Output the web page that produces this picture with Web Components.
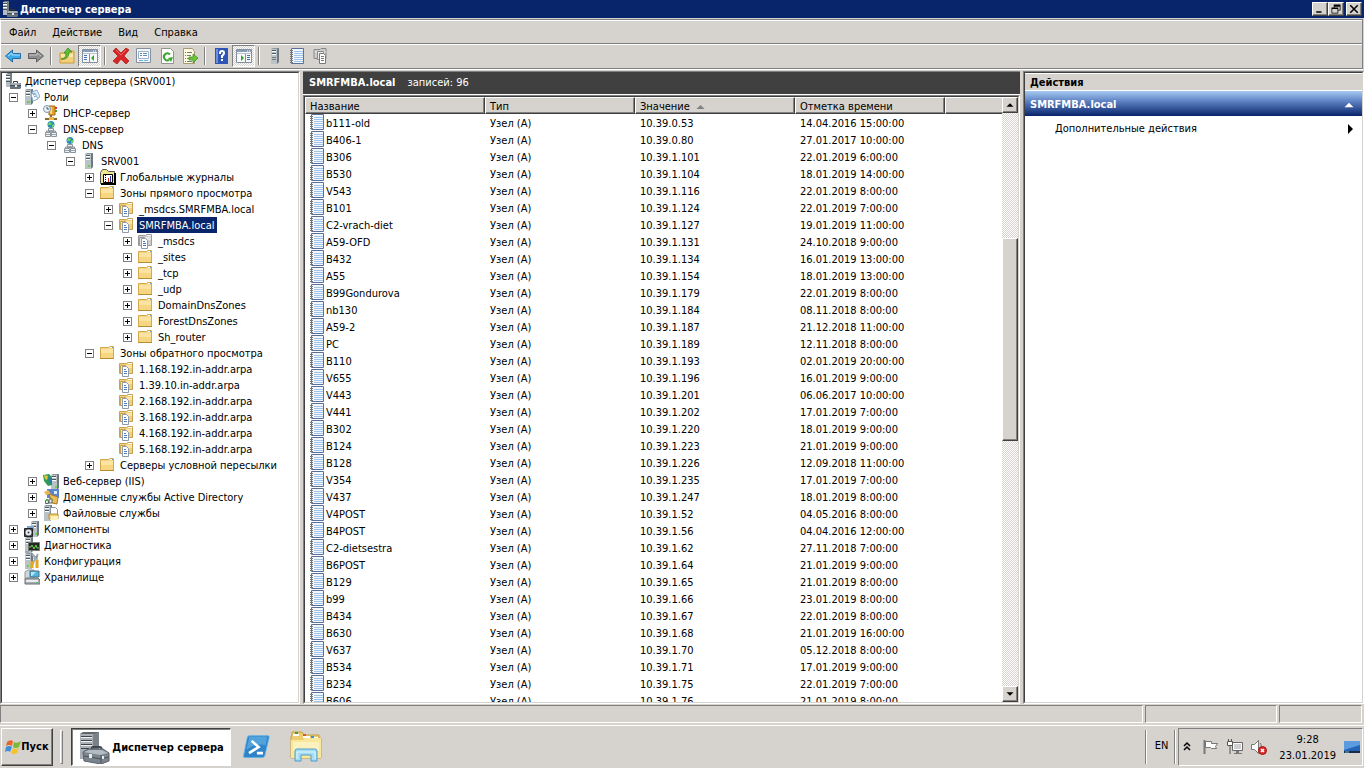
<!DOCTYPE html>
<html lang="ru">
<head>
<meta charset="utf-8">
<title>Диспетчер сервера</title>
<style>
  html, body {
    height: 100%;
    margin: 0;
  }

  body {
    --face: #d6d3ce;
    --navy: #08246b;
    --shadow: #808080;
    --dark: #404040;

    overflow: hidden;
    background: var(--face);
    color: #000;
    font: 11px/16px "DejaVu Sans Condensed", "DejaVu Sans", sans-serif;
  }
</style>
</head>
<body>
<server-desktop></server-desktop>

<script>
const FOLDER = `
  <path d="M.5 2.500h8l1-1h4v12H.5z" fill="#f6d683" stroke="#d3a94e"/>
  <path d="M10 2h3v1h-3z" fill="#fff"/><path d="M12 2h1v1h-1z" fill="#5b9ad0"/>
  <path d="M1 4h12v4H1z" fill="#fbe4a2"/>
  <path d="M0 13.500h14" stroke="#b98d30"/>`;

const zoneFolder = (fill, light, edge) => `
  <path d="M.5 2.500h7l1-1h5v11H.5z" fill="${fill}" stroke="${edge}"/>
  <path d="M9 2h4v1H9z" fill="#fff"/><path d="M1 4h12v3H1z" fill="${light}"/>
  <path d="M1.500 4.500h5v8h-5z" fill="${light}" stroke="${edge}"/>
  <path d="M3.500 5.500h4l2 2v8h-6z" fill="#fff" stroke="#8f9aa8"/>
  <path d="M5 8.500h2M5 10.500h3M5 12.500h3" stroke="#4f79b8"/>`;

const TOWER = `
  <path d="M1 1l2-1h6v14H1z" fill="#8d99a1"/><path d="M1 1h6v15H1z" fill="#b9c2c7"/>
  <path d="M7 1l2-1v14l-2 2z" fill="#6d7880"/>
  <path d="M2 2.500h4M2 5.500h4" stroke="#4e5a62"/><path d="M2 3.500h4M2 6.500h4" stroke="#fff"/>`;

const GLOBE = `
  <circle cx="8" cy="3.500" r="3.500" fill="#2b8cb4"/>
  <path d="M6 1l3 1-1 2-3 0zM9 4l2-1v2l-2 2z" fill="#6fd45b"/>`;

const NETWORK = `${GLOBE}
  <path d="M8 7v4M3.500 12v-2h9v2" fill="none" stroke="#888"/>
  <path d="M5.500 7.500h5v3h-5zM2.500 11.500h5v4h-5zM8.500 11.500h5v4h-5z" fill="#edf1f4" stroke="#8a949c"/>
  <path d="M3 13.500h4M9 13.500h4M6 9.500h4" stroke="#9aa5ae"/>`;

const MANAGER = `
  <path d="M1 1l2-1h4v12l-2 2H1z" fill="#737d84"/><path d="M1 1h4v13H1z" fill="#b4bcc1"/>
  <path d="M1 2.500h4M1 5.500h4M1 8.500h4" stroke="#4c565d"/><path d="M1 3.500h4M1 6.500h4" stroke="#fff"/>
  <path d="M8.500 10V8.500h4V10" fill="none" stroke="#333"/>
  <path d="M5 11l2-1h9v5l-1 1H5z" fill="#68727c"/><path d="M6 10h9l1 2H5z" fill="#a3acb4"/>
  <path d="M5 12.500h11" stroke="#464e55"/><path d="M10 12h2v2h-2z" fill="#e8ecee"/>`;

const NOTEBOOK = `
  <path d="M1.500.5h12v15h-12z" fill="#f2f8fe" stroke="#5b6f9c"/>
  <path d="M4 3.500h9M4 5.500h9M4 7.500h9M4 9.500h9M4 11.500h9M4 13.500h9" stroke="#9fc3e8"/>
  <path d="M0 2.500h3M0 4.500h3M0 6.500h3M0 8.500h3M0 10.500h3M0 12.500h3M0 14.500h3" stroke="#777"/>`;

const consoleFrame = (inner) => `
  <path d="M.5 1.500h15v13h-15z" fill="#f7f9fb" stroke="#8290a2"/>
  <path d="M1 2h14v2H1z" fill="#8c9cb4"/><path d="M11 3h1M13 3h1" stroke="#fff"/>
  <path d="M1 5.500h14" stroke="#b8c2d0"/>${inner}`;

const ICONS = {
  folder: FOLDER,
  zone: zoneFolder("#f2cf7b", "#fbe6a6", "#c9a354"),
  zoneGray: zoneFolder("#cfcfcf", "#e6e6e6", "#9c9c9c"),
  manager: MANAGER,
  network: NETWORK,
  notebook: NOTEBOOK,
  server: `<g transform="translate(3 0)">${TOWER}<path d="M4 12h2v2H4z" fill="#62d742"/></g>`,
  serverPlain: `<g transform="translate(3 0)">${TOWER}<path d="M2 9.500h4M2 11.500h4" stroke="#777"/></g>`,
  roles: `${TOWER}<path d="M3 12h3v2H3z" fill="#62d742"/>
    <path d="M8 3l5-2 3 7-5 3z" fill="#e4f0fb" stroke="#88acce"/>
    <path d="M7 5l4-1 3 6-5 2z" fill="#fff" stroke="#88acce"/>
    <path d="M9 6l2-1M10 8l2-1" stroke="#6794c4"/>`,
  dhcp: `<path d="M6 1h6v9H6z" fill="#e8a32e" stroke="#a76a12"/><path d="M7 2h2v7H7z" fill="#ffd578"/>
    <path d="M12 2h2v2h-2z" fill="#d33"/><path d="M12 5h2v2h-2z" fill="#3a9d3a"/>
    <circle cx="4" cy="4" r="3.500" fill="#e9f2fa" stroke="#7f94a8"/><path d="M4 2v2h2" fill="none" stroke="#456"/>
    <path d="M8 10v4M2 14h12" stroke="#8a6a2c" stroke-width="2"/><path d="M6 12h5v3H6z" fill="#f0b84c"/>`,
  logs: `<path d="M.5 3.500l2-3h4l2 2h6v12H.5z" fill="#f0e58d" stroke="#555"/>
    <path d="M3.500 5.500h9v8h-9z" fill="#fff" stroke="#000"/><path d="M5.500 6v7" stroke="#000" stroke-dasharray="1 1"/>
    <path d="M8.500 9v4" stroke="#d22"/><path d="M10.500 7v6" stroke="#23a"/>
    <path d="M15 4v12M1 15h14" stroke="#000" stroke-width="2"/>`,
  iis: `<g transform="translate(7 1)">${TOWER}</g><path d="M0 2l6-1 3 3v8l-4 1-4-5z" fill="#2e9c54"/>
    <path d="M1 2l4 1-1 4-2-1z" fill="#e9c431"/><path d="M5 3l4 3v6l-3-3z" fill="#287cb4"/>
    <path d="M12 13h2v2h-2z" fill="#62d742"/>`,
  directory: `<path d="M4 0h12v9H4z" fill="#5b84ca"/><path d="M1 3l4-2 3 4-5 1z" fill="#eab953"/>
    <path d="M6 5l9 3-1 7-5-1z" fill="#e8bd57" stroke="#a97d28"/><path d="M11 2h3v3h-3z" fill="#d9ecff"/>
    <path d="M2.500 11.500h3v3h-3zM6 10h3v4H6z" fill="#e5e9eb" stroke="#566"/><path d="M3 10h2v2H3z" fill="#4b4"/>`,
  files: `${TOWER}<path d="M7.500 2.500h5l2 2v5h-7z" fill="#fff" stroke="#8494a4"/>
    <path d="M6 9h9v5H6z" fill="#f3cd70" stroke="#b88d35"/><path d="M8 11h7v4H7z" fill="#fff1bb"/>`,
  components: `<g transform="translate(6 0)">${TOWER}</g><path d="M3 5h7v5H3z" fill="#85a4cc"/>
    <path d="M.5 7.500h8v8h-8z" fill="#454b52" stroke="#222"/><circle cx="4.500" cy="11.500" r="3" fill="#e7edf1"/>
    <circle cx="4.500" cy="11.500" r="1" fill="#345"/><path d="M11 12h2v2h-2z" fill="#62d742"/>`,
  diagnostics: `${TOWER}<path d="M4.500 5.500h11v8h-11z" fill="#202820" stroke="#777"/>
    <path d="M5 10h2l1-2 2 4 2-4 1 3h2" fill="none" stroke="#72d152"/><path d="M1 14h4v2H1z" fill="#9aa"/>`,
  config: `${TOWER}<path d="M8 1l3 3-1 2M14 1l-4 7-3 6" fill="none" stroke="#a0aab2" stroke-width="2"/>
    <path d="M8 8v7M13 7v8" stroke="#e5a71f" stroke-width="3"/><path d="M13 3v4" stroke="#777"/>
    <path d="M3 12h2v2H3z" fill="#62d742"/>`,
  storage: `<path d="M1 3l3-2h6v9H1z" fill="#d1d8dc" stroke="#8a949b"/>
    <path d="M6 2h9v6H6z" fill="#4fb4de" stroke="#4a7187"/><path d="M7 3h5L8 7H7z" fill="#b2e6f8"/>
    <path d="M1 10l2-1h11l2 2v4H1z" fill="#a7aeb3" stroke="#697178"/><path d="M2 11h12v2H2z" fill="#e8ecee"/>
    <path d="M12 13h2v1h-2z" fill="#4c4"/>`,

  back: `<path d="M.5 8l7-6v3.500h8v5h-8V14z" fill="#3fa9e6" stroke="#1b6dab"/><path d="M3 8l4-3v2h8" fill="none" stroke="#a9e0fb"/>`,
  forward: `<path d="M15.500 8l-7-6v3.500h-8v5h8V14z" fill="#8f8f8f" stroke="#5d5d5d"/><path d="M13 8L9 5v2H1" fill="none" stroke="#c4c4c4"/>`,
  up: `<path d="M1 5h6l1-2h7v12H1z" fill="#f3cf78" stroke="#c79c3f"/><path d="M2 6h12v3H2z" fill="#fbe7a7"/>
    <path d="M2 11c4 0 5-3 5-6H5l4-5 4 4h-3c0 5-3 8-8 7z" fill="#5fc138" stroke="#2d7e1b" stroke-width=".7"/>`,
  tree: consoleFrame(`<path d="M2 7.500h3M2 9.500h3M2 11.500h3" stroke="#4573b5"/><path d="M7.500 6v8" stroke="#8290a2"/>
    <path d="M12 7v6l-3-3z" fill="#37a52a"/>`),
  actions: consoleFrame(`<path d="M11 7.500h3M11 9.500h3M11 11.500h3" stroke="#4573b5"/><path d="M9.500 6v8" stroke="#8290a2"/>
    <path d="M5 7v6l3-3z" fill="#37a52a"/>`),
  remove: `<path d="M0 3l3-3 5 5 5-5 3 2-5 6 5 5-3 3-5-5-4 5-4-3 5-5z" fill="#d92525" stroke="#a91212" stroke-width=".7"/>
    <path d="M3 2l5 5 5-5" fill="none" stroke="#f26a5d"/>`,
  properties: `<path d="M.5.5h14v14H.5z" fill="#f4f7fa" stroke="#8291a4"/><path d="M2.500 3.500h10v7h-10z" fill="#fff" stroke="#a3b3c6"/>
    <path d="M4 5.500h2M7 5.500h4M4 7.500h2M7 7.500h4" stroke="#5f8bbd"/><path d="M3 12.500h4M8 12.500h4" stroke="#6bb3d7"/>`,
  refresh: `<path d="M2.500.5h9l3 3v12h-12z" fill="#fff" stroke="#929292"/>
    <path d="M11 6.500A3.500 3.500 0 1 0 10 12" fill="none" stroke="#38a52c" stroke-width="2"/><path d="M9 10l5-1-2 5z" fill="#38a52c"/>`,
  exportList: `<path d="M1.500.5h9l2 3v12h-11z" fill="#fffbe2" stroke="#a39b75"/>
    <path d="M3 4.500h1M5 4.500h5M3 7.500h1M5 7.500h4M3 10.500h1M5 10.500h3M3 13.500h1M5 13.500h5" stroke="#76787c"/>
    <path d="M7 9h4V6l5 4-5 5v-3H7z" fill="#6bc53a" stroke="#398b1d" stroke-width=".7"/>`,
  help: `<path d="M2 0h13v16H2z" fill="#2d55b5"/><path d="M3 1h2v14H3z" fill="#6e90da"/>
    <path d="M7 6V5q0-2 2-2t2 2q0 1-1 2l-1 1v2M9 11v2" fill="none" stroke="#fff" stroke-width="2"/>`,
  copies: `<path d="M1 1.500h6l1-1h5v10H1z" fill="#ccc" stroke="#888"/><path d="M2 4h11" stroke="#eee"/>
    <path d="M4.500 3.500h6v8h-6z" fill="#eee" stroke="#888"/><path d="M6.500 5.500h4l2 2v8h-6z" fill="#fff" stroke="#777"/>
    <path d="M8 8.500h3M8 10.500h3M8 12.500h3" stroke="#777"/>`,

  windows: `<path d="M2 3q3-3 6-1L7 7q-3-2-6 0z" fill="#e8662b"/><path d="M9 3q3 2 7-1l-2 6q-3 2-6 0z" fill="#7cb839"/>
    <path d="M1 8q3-2 6 0l-2 5q-2-2-5 0z" fill="#3f8fd8"/><path d="M8 9q3 2 6 0l-2 5q-3 2-6 0z" fill="#f5c42c"/>`,
  toolbox: `<path d="M2 2l3-2h16v23l-4 4H2z" fill="#5f666c"/><path d="M2 2h13v25H2z" fill="#a9afb4"/>
    <path d="M15 2l6-2v24l-6 3z" fill="#7b8287"/>
    <path d="M3 4.500h11M3 8.500h11M3 12.500h11M3 16.500h8" stroke="#3f464b"/>
    <path d="M3 5.500h11M3 9.500h11M3 13.500h11" stroke="#eef0f1"/>
    <path d="M13.500 19v-2q0-2 2-2h6q2 0 2 2v2" fill="none" stroke="#41474d" stroke-width="2"/>
    <path d="M5 20l5-3h15l6 4v8l-8 3-17-3z" fill="#7b848c" stroke="#596169"/>
    <path d="M6 20l5-2h13l6 3-8 2z" fill="#b3bbc2"/><path d="M23 23v8M6 24l17 3 8-2" fill="none" stroke="#4d555c"/>
    <path d="M11 22h3v4h-3zM24 24h2v3h-2z" fill="#e8ebed"/>`,
  powershell: `<path d="M8 3h22q1 0 1 2l-5 21q-1 2-2 2H3q-2 0-1-3L6 5q1-2 2-2z" fill="#2f83c9" stroke="#63b2e8"/>
    <path d="M8 4h21l-2 10Q16 11 5 19L8 6z" fill="#6bb7e8" opacity=".6"/>
    <path d="M11 9l8 7-11 7M17 23h7" fill="none" stroke="#fff" stroke-width="3"/>`,
  explorer: `<path d="M2 5V1h10l2 3h15v3h2v20H1V5z" fill="#eccd70" stroke="#c2a047"/>
    <path d="M3 3h6v2H3zM13 5h7v2h-7zM22 6h6v2h-6z" fill="#fff"/>
    <path d="M5 1h3v2H5z" fill="#43a047"/><path d="M13 3h3v2h-3z" fill="#d9572b"/><path d="M21 5h3v2h-3z" fill="#3b8fd5"/>
    <path d="M1 9h12l2-2h16v20H1z" fill="#f9e79c"/><path d="M3 11h26v9H3z" fill="#fdf2bd"/>
    <path d="M5 30V20q0-2 2-2h18q2 0 2 2v10h-6v-6H11v6z" fill="#a4dcf4" stroke="#4f9fc9"/>
    <path d="M7 28v-7h18v7" fill="none" stroke="#e2f7ff"/>`,
  flag: `<path d="M1.500 1v14" stroke="#777" stroke-width="2"/><path d="M2.500 2.500h6v2h6l-2 3 1 2h-5l-1-1h-5z" fill="#fff" stroke="#777"/>`,
  wired: `<path d="M5.500 3.500h10v8h-10z" fill="#cfcfcf" stroke="#666"/><path d="M6.500 4.500h8v6h-8z" fill="none" stroke="#fff"/>
    <path d="M9 12h3v2H9zM7 14h8v1H7z" fill="#777"/><path d="M.5 2.500h5v4h-5z" fill="#fff" stroke="#555"/>
    <path d="M1.500 0v2M4.500 0v2M3 7v8" stroke="#555"/>`,
  muted: `<path d="M.5 5.500h3l4-4v13l-4-4h-3z" fill="#fff" stroke="#777"/><path d="M9 4q2 2 1 4" fill="none" stroke="#777"/>
    <circle cx="11.500" cy="11.500" r="4" fill="#d92b2b" stroke="#a51515"/><path d="M10 10l3 3M13 10l-3 3" stroke="#fff" stroke-width="1.500"/>`,
  desktop: `<path d="M0 2h16v10H0z" fill="#2563b8"/><path d="M0 2h16v4L0 11z" fill="#5c9be0"/>
    <path d="M0 12h16v2H0z" fill="#1a2c44"/><path d="M1 13h4" stroke="#6fc3f0"/>`,
  chevrons: `<path d="M5 7l3-3 3 3M5 11l3-3 3 3" fill="none" stroke="#000" stroke-width="1.500"/>`,

  minimize: `<path d="M3 11h7v2H3z"/>`,
  restore: `<path d="M5 2h9v8h-3V9h2V5H6v1H5zM2 6h9v8H2zm1 2v5h7V8z" fill-rule="evenodd"/>`,
  close: `<path d="M3 3l10 10M13 3L3 13" stroke="#000" stroke-width="2"/>`,
  triangleUp: `<path d="M4 10h8L8 6z" fill="currentColor"/>`,
  headerUp: `<path d="M3 11h10L8 6z" fill="currentColor"/>`,
  triangleDown: `<path d="M4 6h8l-4 4z" fill="currentColor"/>`,
  triangleRight: `<path d="M6 3v10l5-5z" fill="currentColor"/>`,
};

const BIG_ICONS = ["powershell", "explorer", "toolbox"];

const MENU = ["Файл", "Действие", "Вид", "Справка"];

// "-" is a separator, a trailing "!" marks a pressed button
const TOOLS = [
  ["back", "Назад"], ["forward", "Вперед"], "-",
  ["up", "Вверх"], ["tree!", "Дерево консоли"], "-",
  ["remove", "Удалить"], ["properties", "Свойства"], ["refresh", "Обновить"], ["exportList", "Экспорт списка"], "-",
  ["help", "Справка"], ["actions!", "Панель действий"], "-",
  ["serverPlain", "Новый сервер"], ["notebook", "Новая запись"], ["copies", "Новая зона"],
];

// depth, icon, label, expander state
const TREE = [
  [0, "manager", "Диспетчер сервера (SRV001)", ""],
  [1, "roles", "Роли", "-"],
  [2, "dhcp", "DHCP-сервер", "+"],
  [2, "network", "DNS-сервер", "-"],
  [3, "network", "DNS", "-"],
  [4, "server", "SRV001", "-"],
  [5, "logs", "Глобальные журналы", "+"],
  [5, "folder", "Зоны прямого просмотра", "-"],
  [6, "zone", "_msdcs.SMRFMBA.local", "+"],
  [6, "zone", "SMRFMBA.local", "-", true],
  [7, "zoneGray", "_msdcs", "+"],
  [7, "folder", "_sites", "+"],
  [7, "folder", "_tcp", "+"],
  [7, "folder", "_udp", "+"],
  [7, "folder", "DomainDnsZones", "+"],
  [7, "folder", "ForestDnsZones", "+"],
  [7, "folder", "Sh_router", "+"],
  [5, "folder", "Зоны обратного просмотра", "-"],
  [6, "zone", "1.168.192.in-addr.arpa", ""],
  [6, "zone", "1.39.10.in-addr.arpa", ""],
  [6, "zone", "2.168.192.in-addr.arpa", ""],
  [6, "zone", "3.168.192.in-addr.arpa", ""],
  [6, "zone", "4.168.192.in-addr.arpa", ""],
  [6, "zone", "5.168.192.in-addr.arpa", ""],
  [5, "folder", "Серверы условной пересылки", "+"],
  [2, "iis", "Веб-сервер (IIS)", "+"],
  [2, "directory", "Доменные службы Active Directory", "+"],
  [2, "files", "Файловые службы", "+"],
  [1, "components", "Компоненты", "+"],
  [1, "diagnostics", "Диагностика", "+"],
  [1, "config", "Конфигурация", "+"],
  [1, "storage", "Хранилище", "+"],
];

const RECORDS = [
  ["b111-old", "10.39.0.53", "14.04.2016 15:00:00"],
  ["B406-1", "10.39.0.80", "27.01.2017 10:00:00"],
  ["B306", "10.39.1.101", "22.01.2019 6:00:00"],
  ["B530", "10.39.1.104", "18.01.2019 14:00:00"],
  ["V543", "10.39.1.116", "22.01.2019 8:00:00"],
  ["B101", "10.39.1.124", "22.01.2019 7:00:00"],
  ["C2-vrach-diet", "10.39.1.127", "19.01.2019 11:00:00"],
  ["A59-OFD", "10.39.1.131", "24.10.2018 9:00:00"],
  ["B432", "10.39.1.134", "16.01.2019 13:00:00"],
  ["A55", "10.39.1.154", "18.01.2019 13:00:00"],
  ["B99Gondurova", "10.39.1.179", "22.01.2019 8:00:00"],
  ["nb130", "10.39.1.184", "08.11.2018 8:00:00"],
  ["A59-2", "10.39.1.187", "21.12.2018 11:00:00"],
  ["PC", "10.39.1.189", "12.11.2018 8:00:00"],
  ["B110", "10.39.1.193", "02.01.2019 20:00:00"],
  ["V655", "10.39.1.196", "16.01.2019 9:00:00"],
  ["V443", "10.39.1.201", "06.06.2017 10:00:00"],
  ["V441", "10.39.1.202", "17.01.2019 7:00:00"],
  ["B302", "10.39.1.220", "18.01.2019 9:00:00"],
  ["B124", "10.39.1.223", "21.01.2019 9:00:00"],
  ["B128", "10.39.1.226", "12.09.2018 11:00:00"],
  ["V354", "10.39.1.235", "17.01.2019 7:00:00"],
  ["V437", "10.39.1.247", "18.01.2019 8:00:00"],
  ["V4POST", "10.39.1.52", "04.05.2016 8:00:00"],
  ["B4POST", "10.39.1.56", "04.04.2016 12:00:00"],
  ["C2-dietsestra", "10.39.1.62", "27.11.2018 7:00:00"],
  ["B6POST", "10.39.1.64", "21.01.2019 9:00:00"],
  ["B129", "10.39.1.65", "21.01.2019 8:00:00"],
  ["b99", "10.39.1.66", "23.01.2019 8:00:00"],
  ["B434", "10.39.1.67", "22.01.2019 8:00:00"],
  ["B630", "10.39.1.68", "21.01.2019 16:00:00"],
  ["V637", "10.39.1.70", "05.12.2018 8:00:00"],
  ["B534", "10.39.1.71", "17.01.2019 9:00:00"],
  ["B234", "10.39.1.75", "22.01.2019 7:00:00"],
  ["B606", "10.39.1.76", "21.01.2019 8:00:00"],
];

const BUTTON_RESET = /* css */`
  button {
    display: flex;
    align-items: center;
    justify-content: center;
    box-sizing: border-box;
    margin: 0;
    padding: 0;
    border: 0;
    background: none;
    color: inherit;
    font: inherit;
  }
`;

const RAISED = /* css */`
  .raised {
    border: 1px solid;
    border-color: #fff var(--dark) var(--dark) #fff;
    background: var(--face);
    box-shadow: inset -1px -1px var(--shadow);
  }
`;

class BaseElement extends HTMLElement {
  constructor() {
    super();
    this.attachShadow({ mode: "open" });
  }

  connectedCallback() {
    this.shadowRoot.innerHTML = `<style>${this.constructor.styles}</style>${this.render()}`;
  }
}

class SysIcon extends BaseElement {
  static get styles() {
    return /* css */`
      :host {
        display: block;
        flex: none;
        width: var(--icon-size, 16px);
        height: var(--icon-size, 16px);
      }

      svg {
        display: block;
        width: 100%;
        height: 100%;
      }
    `;
  }

  render() {
    const name = this.getAttribute("name");
    const box = BIG_ICONS.includes(name) ? 32 : 16;
    return `<svg viewBox="0 0 ${box} ${box}" aria-hidden="true">${ICONS[name]}</svg>`;
  }
}

class TitleBar extends BaseElement {
  static get styles() {
    return /* css */`
      ${BUTTON_RESET}
      ${RAISED}
      :host {
        display: flex;
        align-items: center;
        gap: 2px;
        height: 18px;
        padding: 0 2px;
        background: var(--navy);
        color: #fff;
        font-weight: bold;
      }

      h1 {
        flex: 1;
        margin: 0;
        padding-top: 2px;
        font: inherit;
      }

      .controls {
        display: flex;
        color: #000;
      }

      button {
        width: 16px;
        height: 14px;
        --icon-size: 12px;
      }

      button:last-child {
        margin-left: 2px;
      }
    `;
  }

  render() {
    return /* html */`
      <sys-icon name="manager"></sys-icon>
      <h1><slot></slot></h1>
      <div class="controls">
        <button class="raised" aria-label="Свернуть"><sys-icon name="minimize"></sys-icon></button>
        <button class="raised" aria-label="Восстановить"><sys-icon name="restore"></sys-icon></button>
        <button class="raised" aria-label="Закрыть"><sys-icon name="close"></sys-icon></button>
      </div>
    `;
  }
}

class MenuBar extends BaseElement {
  static get styles() {
    return /* css */`
      ${BUTTON_RESET}
      :host {
        display: flex;
        box-sizing: border-box;
        height: 24px;
        border-top: 1px solid #fff;
        border-bottom: 1px solid var(--shadow);
      }

      button {
        padding: 2px 8px 0;
      }
    `;
  }

  render() {
    return MENU.map((item) => `<button>${item}</button>`).join("");
  }
}

class ToolBar extends BaseElement {
  static get styles() {
    return /* css */`
      ${BUTTON_RESET}
      :host {
        display: flex;
        box-sizing: border-box;
        height: 24px;
        border-top: 1px solid #fff;
      }

      button {
        width: 23px;
        height: 22px;
      }

      .pressed {
        border: 1px solid;
        border-color: var(--shadow) #fff #fff var(--shadow);
        background: repeating-conic-gradient(#fff 0 25%, var(--face) 0 50%) 0 0 / 2px 2px;
      }

      .separator {
        width: 2px;
        box-sizing: border-box;
        margin: 2px 3px 3px;
        border-left: 1px solid var(--shadow);
        border-right: 1px solid #fff;
      }
    `;
  }

  render() {
    return TOOLS.map((tool) => {
      if (tool === "-") return `<span class="separator"></span>`;
      const [name, label] = tool;
      const pressed = name.endsWith("!");
      return `<button class="${pressed ? "pressed" : ""}" aria-label="${label}">
        <sys-icon name="${name.replace("!", "")}"></sys-icon></button>`;
    }).join("");
  }
}

class ConsoleTree extends BaseElement {
  static get styles() {
    return /* css */`
      ${BUTTON_RESET}
      :host {
        display: block;
        overflow: hidden;
        background: #fff;
      }

      ul {
        margin: 0;
        padding: 0 0 0 3px;
        list-style: none;
      }

      li {
        display: flex;
        align-items: center;
        height: 16px;
        padding-left: calc(var(--depth) * 19px - 15px);
        white-space: nowrap;
      }

      li.root {
        padding-left: 0;
      }

      li.leaf {
        padding-left: calc(var(--depth) * 19px);
      }

      button {
        width: 9px;
        height: 9px;
        margin-right: 6px;
        border: 1px solid var(--shadow);
      }

      button svg {
        display: block;
      }

      .label {
        height: 14px;
        margin-left: 2px;
        padding: 2px 2px 0;
        line-height: 14px;
      }

      .selected {
        background: var(--navy);
        color: #fff;
      }
    `;
  }

  renderExpander(state) {
    if (!state) return "";
    const label = state === "+" ? "Развернуть" : "Свернуть";
    const path = state === "+" ? "M1 3h5v1H1zM3 1h1v5H3z" : "M1 3h5v1H1z";
    return `<button aria-label="${label}"><svg width="7" height="7"><path d="${path}"/></svg></button>`;
  }

  render() {
    const rows = TREE.map(([depth, icon, text, state, selected]) => `
      <li class="${depth === 0 ? "root" : state ? "" : "leaf"}" style="--depth: ${depth}">
        ${this.renderExpander(state)}
        <sys-icon name="${icon}"></sys-icon>
        <span class="label ${selected ? "selected" : ""}">${text}</span>
      </li>`).join("");
    return `<ul>${rows}</ul>`;
  }
}

class ScrollBar extends BaseElement {
  static get styles() {
    return /* css */`
      ${BUTTON_RESET}
      ${RAISED}
      :host {
        display: flex;
        flex-direction: column;
        flex: none;
        width: 16px;
        background: repeating-conic-gradient(#fff 0 25%, var(--face) 0 50%) 0 0 / 2px 2px;
      }

      button {
        flex: none;
        height: 16px;
        --icon-size: 14px;
      }

      .before { flex: 125; }
      .thumb { flex: 202; }
      .after { flex: 246; }
    `;
  }

  render() {
    return /* html */`
      <button class="raised" aria-label="Прокрутить вверх"><sys-icon name="triangleUp"></sys-icon></button>
      <div class="before"></div>
      <div class="thumb raised"></div>
      <div class="after"></div>
      <button class="raised" aria-label="Прокрутить вниз"><sys-icon name="triangleDown"></sys-icon></button>
    `;
  }
}

class RecordList extends BaseElement {
  static get styles() {
    return /* css */`
      :host {
        display: flex;
        overflow: hidden;
        background: #fff;
      }

      .rows {
        flex: 1;
        overflow: hidden;
      }

      table {
        width: 100%;
        table-layout: fixed;
        border-collapse: separate;
        border-spacing: 0;
      }

      .name { width: 180px; }
      .type { width: 150px; }
      .value { width: 160px; }
      .time { width: 150px; }

      th {
        box-sizing: border-box;
        height: 17px;
        padding: 2px 4px 0;
        border: 1px solid;
        border-color: #fff var(--dark) var(--dark) #fff;
        background: var(--face);
        box-shadow: inset -1px -1px var(--shadow);
        font-weight: normal;
        line-height: 13px;
        text-align: left;
      }

      th:last-child {
        border-right: 0;
        box-shadow: inset 0 -1px var(--shadow);
      }

      th div {
        display: flex;
        align-items: center;
        gap: 4px;
        height: 13px;
      }

      th sys-icon {
        --icon-size: 13px;
        color: var(--shadow);
      }

      td {
        box-sizing: border-box;
        height: 17px;
        padding: 2px 5px 0;
        line-height: 15px;
        white-space: nowrap;
      }

      td.record {
        padding-top: 0;
      }

      td div {
        display: flex;
      }

      td span {
        padding-top: 2px;
      }
    `;
  }

  render() {
    const rows = RECORDS.map(([name, value, time]) => `
      <tr>
        <td class="record"><div><sys-icon name="notebook"></sys-icon><span>${name}</span></div></td>
        <td>Узел (A)</td>
        <td>${value}</td>
        <td>${time}</td>
        <td></td>
      </tr>`).join("");
    return /* html */`
      <div class="rows">
        <table>
          <thead>
            <tr>
              <th class="name">Название</th>
              <th class="type">Тип</th>
              <th class="value"><div>Значение <sys-icon name="headerUp"></sys-icon></div></th>
              <th class="time">Отметка времени</th>
              <th></th>
            </tr>
          </thead>
          <tbody>${rows}</tbody>
        </table>
      </div>
      <scroll-bar></scroll-bar>
    `;
  }
}

class ActionsPane extends BaseElement {
  static get styles() {
    return /* css */`
      ${BUTTON_RESET}
      :host {
        display: block;
        background: #fff;
      }

      h2, h3 {
        display: flex;
        align-items: center;
        justify-content: space-between;
        box-sizing: border-box;
        margin: 0;
        padding: 2px 4px 0 5px;
        font: inherit;
        font-weight: bold;
      }

      h2 {
        height: 18px;
        border-top: 1px solid #fff;
        border-bottom: 1px solid #fff;
        background: var(--face);
      }

      h3 {
        height: 25px;
        background: linear-gradient(#a6caf0, #5f83c4 40%, var(--navy));
        color: #fff;
        --icon-size: 18px;
      }

      .action {
        justify-content: space-between;
        width: 100%;
        height: 24px;
        padding: 2px 4px 0 30px;
      }
    `;
  }

  render() {
    return /* html */`
      <h2>Действия</h2>
      <h3>SMRFMBA.local <sys-icon name="triangleUp"></sys-icon></h3>
      <button class="action">Дополнительные действия <sys-icon name="triangleRight"></sys-icon></button>
    `;
  }
}

class StatusBar extends BaseElement {
  static get styles() {
    return /* css */`
      :host {
        display: flex;
        gap: 2px;
        box-sizing: border-box;
        height: 20px;
        padding: 0 2px 2px 0;
      }

      div {
        box-sizing: border-box;
        border: 1px solid;
        border-color: var(--shadow) #fff #fff var(--shadow);
      }

      .message { flex: 1; }
      .progress { width: 132px; }
      .zone { width: 83px; }
    `;
  }

  render() {
    return `<div class="message"></div><div class="progress"></div><div class="zone"></div>`;
  }
}

class TaskBar extends BaseElement {
  static get styles() {
    return /* css */`
      ${BUTTON_RESET}
      ${RAISED}
      :host {
        display: flex;
        align-items: center;
        box-sizing: border-box;
        height: 43px;
        padding: 0 1px;
        border-top: 1px solid #fff;
      }

      .start, .task {
        height: 38px;
        font-weight: bold;
      }

      .start {
        width: 52px;
      }

      .grip {
        width: 3px;
        height: 34px;
        margin: 0 8px 0 7px;
        box-sizing: border-box;
        border: 1px solid;
        border-color: #fff var(--shadow) var(--shadow) #fff;
      }

      .task {
        gap: 2px;
        width: 160px;
        padding-top: 1px;
        border: 1px solid;
        border-color: var(--dark) #fff #fff var(--dark);
        background: #fff;
        box-shadow: inset 1px 1px var(--shadow);
        --icon-size: 32px;
      }

      .pinned {
        width: 50px;
        height: 38px;
        --icon-size: 28px;
      }

      .pinned.explorer {
        --icon-size: 32px;
      }

      .space {
        flex: 1;
      }

      .divider {
        width: 2px;
        height: 34px;
        box-sizing: border-box;
        border-left: 1px solid var(--shadow);
        border-right: 1px solid #fff;
      }

      .language {
        padding: 0 6px 3px 8px;
      }

      .tray {
        display: flex;
        align-items: center;
        gap: 8px;
        box-sizing: border-box;
        height: 38px;
        margin-left: 2px;
        padding-right: 2px;
        border: 1px solid;
        border-color: var(--shadow) #fff #fff var(--shadow);
      }

      time {
        padding: 2px 0 0 4px;
        text-align: center;
      }
    `;
  }

  render() {
    return /* html */`
      <button class="start raised"><sys-icon name="windows"></sys-icon>Пуск</button>
      <span class="grip"></span>
      <button class="task"><sys-icon name="toolbox"></sys-icon>Диспетчер сервера</button>
      <button class="pinned" aria-label="Windows PowerShell"><sys-icon name="powershell"></sys-icon></button>
      <button class="pinned explorer" aria-label="Проводник"><sys-icon name="explorer"></sys-icon></button>
      <span class="space"></span>
      <span class="divider"></span>
      <button class="language">EN</button>
      <span class="divider"></span>
      <div class="tray">
        <button aria-label="Скрытые значки"><sys-icon name="chevrons"></sys-icon></button>
        <button aria-label="Центр поддержки"><sys-icon name="flag"></sys-icon></button>
        <button aria-label="Сеть"><sys-icon name="wired"></sys-icon></button>
        <button aria-label="Громкость"><sys-icon name="muted"></sys-icon></button>
        <time>9:28<br>23.01.2019</time>
        <button aria-label="Свернуть все окна"><sys-icon name="desktop"></sys-icon></button>
      </div>
    `;
  }
}

class ServerDesktop extends BaseElement {
  static get styles() {
    return /* css */`
      :host {
        display: flex;
        flex-direction: column;
        height: 100vh;
      }

      .bars {
        margin: 1px 1px 0 0;
        border: 1px solid var(--shadow);
        border-left-color: #fff;
        box-shadow: 0 1px #fff;
      }

      main {
        display: grid;
        grid-template-columns: 300px minmax(0, 1fr) 341px;
        gap: 3px;
        flex: 1;
        min-height: 0;
        padding: 2px 0 1px;
      }

      .sunken {
        display: grid;
        box-sizing: border-box;
        min-height: 0;
        border: 1px solid;
        border-color: var(--shadow) #fff #fff var(--shadow);
      }

      .sunken > * {
        min-height: 0;
        border: 1px solid;
        border-color: var(--dark) var(--face) var(--face) var(--dark);
      }

      .result {
        display: flex;
        flex-direction: column;
        min-height: 0;
      }

      .result .sunken {
        flex: 1;
      }

      .caption {
        display: flex;
        align-items: center;
        gap: 12px;
        height: 22px;
        padding: 0 6px;
        border-top: 1px solid var(--shadow);
        border-bottom: 1px solid #fff;
        background: var(--dark);
        color: #fff;
      }
    `;
  }

  render() {
    return /* html */`
      <title-bar>Диспетчер сервера</title-bar>
      <div class="bars">
        <menu-bar></menu-bar>
        <tool-bar></tool-bar>
      </div>
      <main>
        <div class="sunken"><console-tree></console-tree></div>
        <div class="result">
          <div class="caption"><strong>SMRFMBA.local</strong><span>записей: 96</span></div>
          <div class="sunken"><record-list></record-list></div>
        </div>
        <div class="sunken"><actions-pane></actions-pane></div>
      </main>
      <status-bar></status-bar>
      <task-bar></task-bar>
    `;
  }
}

customElements.define("sys-icon", SysIcon);
customElements.define("title-bar", TitleBar);
customElements.define("menu-bar", MenuBar);
customElements.define("tool-bar", ToolBar);
customElements.define("console-tree", ConsoleTree);
customElements.define("scroll-bar", ScrollBar);
customElements.define("record-list", RecordList);
customElements.define("actions-pane", ActionsPane);
customElements.define("status-bar", StatusBar);
customElements.define("task-bar", TaskBar);
customElements.define("server-desktop", ServerDesktop);
</script>
</body>
</html>
